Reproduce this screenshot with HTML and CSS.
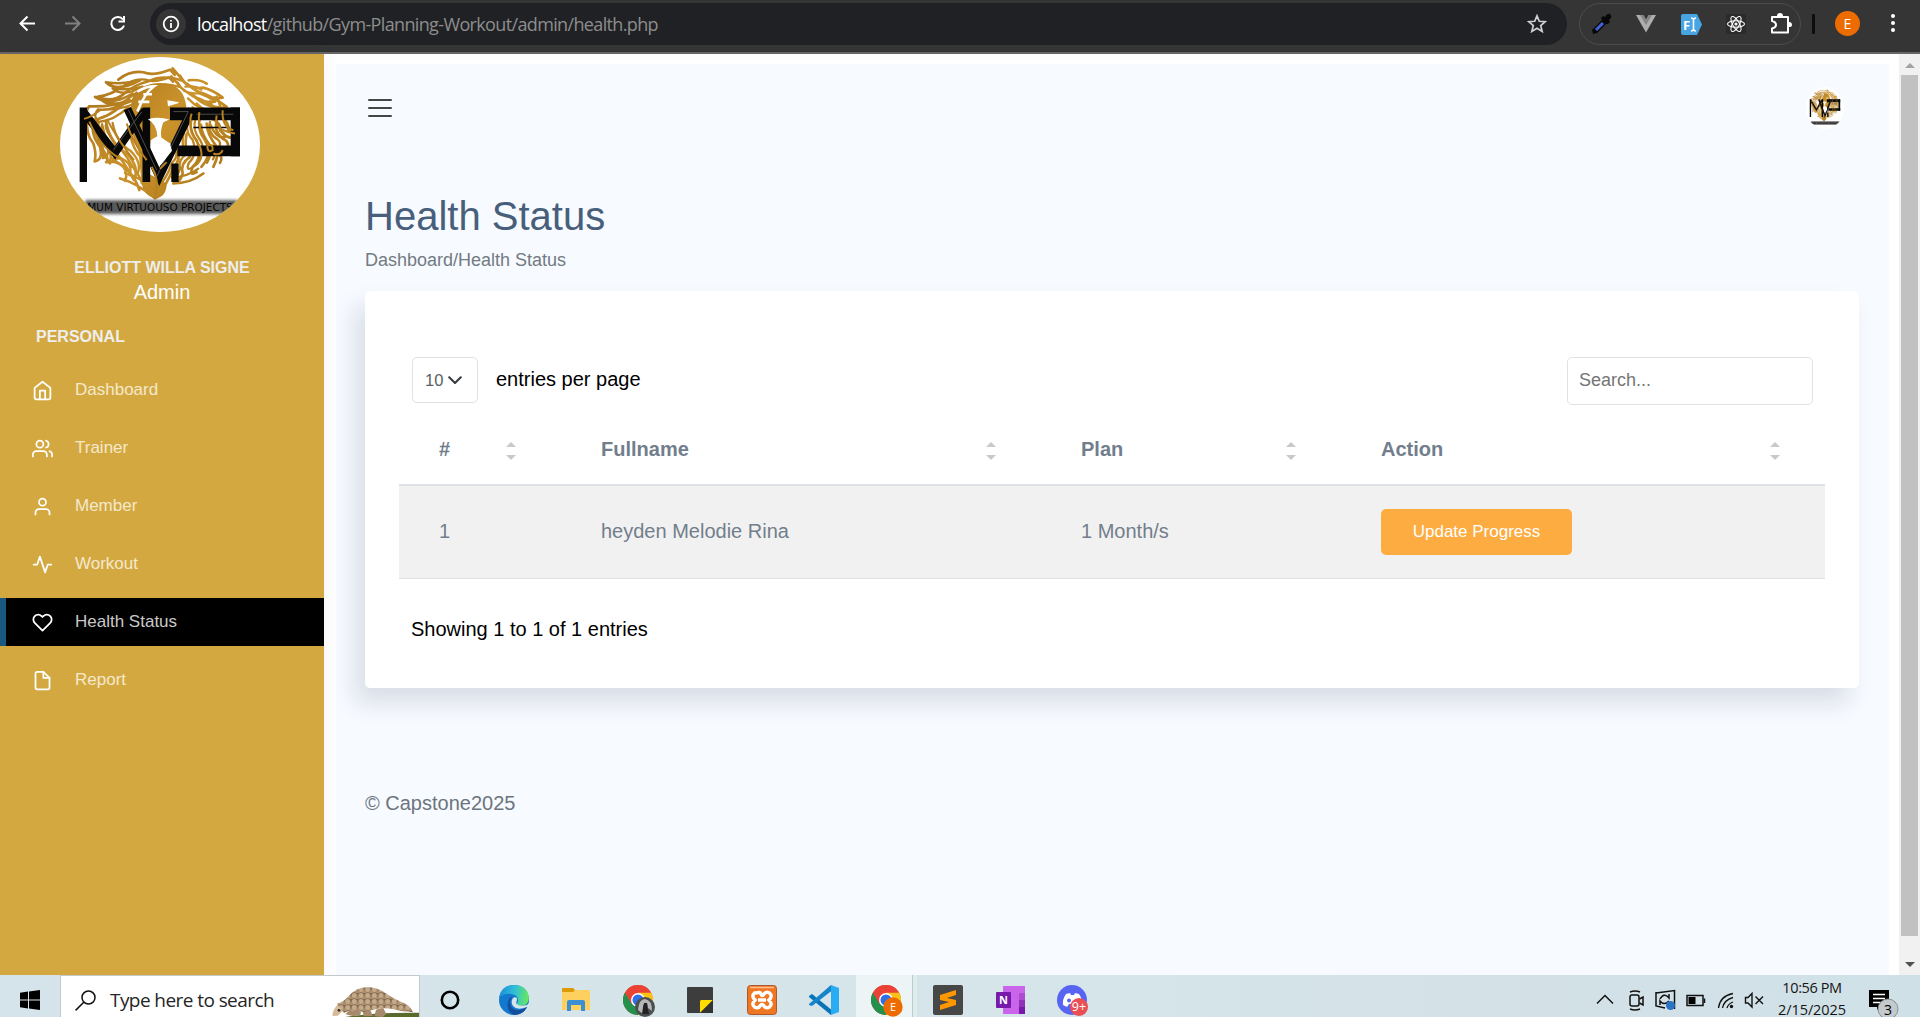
FILE: index.html
```html
<!DOCTYPE html>
<html lang="en">
<head>
<meta charset="utf-8">
<title>Health Status</title>
<link rel="stylesheet" href="styles.css">
</head>
<body>
<svg width="0" height="0" class="defs">
  <defs>
    <linearGradient id="gold" gradientUnits="userSpaceOnUse" x1="260" y1="60" x2="690" y2="440"><stop offset="0" stop-color="#a8721a"/><stop offset=".5" stop-color="#cb932b"/><stop offset="1" stop-color="#a97318"/></linearGradient>
    <filter id="soft" x="-10%" y="-40%" width="120%" height="180%"><feGaussianBlur stdDeviation="5"/></filter>
    <clipPath id="oval"><ellipse cx="480" cy="283" rx="300" ry="263"/></clipPath>
    <symbol id="logo" viewBox="180 20 600 526" preserveAspectRatio="none">
      <g clip-path="url(#oval)">
        <rect x="180" y="20" width="600" height="526" fill="#fff"/>
        <path fill="url(#gold)" d="M398 140Q420 100 480 98Q535 98 552 140Q572 190 540 255L520 285L500 275Q480 262 452 270L445 370L500 400Q500 440 465 446Q430 435 425 400L415 300Q380 200 398 140Z"/>
        <g id="mane" fill="none" stroke="url(#gold)" stroke-width="8" stroke-linejoin="round" stroke-linecap="round">
          <path d="M318 96Q370 104 420 90Q350 128 318 96M355 88Q390 60 430 66Q460 78 510 58L524 74L518 54L550 92Q490 72 448 92Q400 104 370 132Q340 158 292 140Q340 132 362 110M285 140Q330 170 398 130M268 168Q330 172 390 150M268 168Q248 190 270 210Q320 208 372 160"/>
          <path d="M540 76Q560 120 610 112Q640 120 668 142Q620 150 560 100M566 90Q600 86 620 100M575 130Q620 180 680 170Q640 138 590 122M590 160Q630 200 676 190M650 140Q672 180 650 198Q690 210 684 240Q702 248 700 262Q670 268 652 220"/>
          <path d="M262 208Q256 250 280 280Q290 310 284 334Q310 330 300 290Q270 250 282 220M282 218Q300 300 330 340Q340 300 310 260Q290 230 296 216M318 214Q330 280 380 310Q420 350 402 390Q370 330 334 290M310 300Q330 330 318 336Q350 330 370 350Q385 370 375 392M390 250Q400 300 422 320Q446 360 438 405M340 330Q400 360 418 420M360 385Q410 398 465 444"/>
          <path d="M580 190Q560 240 590 270Q610 320 578 350Q566 380 590 366M600 200Q590 240 615 270Q640 310 604 350M620 220Q620 250 650 290Q660 310 640 350M650 210Q640 250 676 270Q690 280 680 300Q650 280 650 306Q672 320 660 338M560 250Q550 300 570 320Q540 340 548 370Q540 400 520 400Q570 400 610 370M530 300Q545 330 520 350Q505 400 465 444"/>
        </g>
        <use href="#mane" transform="translate(58 30) scale(.88)"/>
        <g fill="none" stroke="#080808">
          <path stroke-width="22" d="M250 172V396"/>
          <path stroke-width="24" d="M250 184L345 308L435 180"/>
          <path stroke-width="23" d="M439 172V396"/>
          <path stroke-width="24" d="M382 175L478 380L576 176"/>
          <path stroke-width="22" d="M525 396V340"/>
          <path stroke-width="38" d="M510 191H720"/>
          <path stroke-width="28" d="M706 172V318"/>
          <path stroke-width="32" d="M532 302H720"/>
          <path stroke-width="5" d="M580 232H690"/>
        </g>
        <path fill="none" stroke="#4c4c4c" stroke-width="3" d="M520 184H565L470 380M590 192H700M385 178L470 360M340 300L425 185"/>
        <path fill="#fff" d="M444 207Q475 198 508 208L490 216Q480 240 484 262L510 280L516 302L482 345L456 290L455 268L472 258Q470 222 444 207M502 150L538 156L532 160L504 168Z"/>
        <path fill="none" stroke="#fff" stroke-width="8" d="M412 124Q440 108 462 108Q434 128 412 184M415 155H448M430 132H456"/>
        <path fill="none" stroke="#b8811f" stroke-width="6" d="M252 206Q275 200 300 180Q340 176 372 160M268 214Q300 290 358 324M320 206Q360 280 402 330M380 220Q400 280 440 330M575 190Q560 230 600 290Q615 330 580 350M598 186Q590 240 626 280M622 286Q640 280 638 300Q622 310 622 286M650 196Q640 240 705 250M668 180Q664 230 700 240M480 356L500 336M455 350Q480 390 465 438M640 310Q660 318 668 300"/>
        <g filter="url(#soft)"><rect x="256" y="450" width="456" height="42" fill="#222" opacity=".75"/></g>
        <text x="480" y="484" text-anchor="middle" textLength="436" lengthAdjust="spacingAndGlyphs" font-family="DejaVu Sans" font-size="29" fill="#050505">MUM VIRTUOUSO PROJECTS</text>
      </g>
    </symbol>
    <symbol id="chrome" viewBox="0 0 30 30">
      <circle cx="15" cy="15" r="15" fill="#ea4335"/>
      <path fill="#fbc116" d="M15 15L15 30A15 15 0 0 0 28 7.500H15Z"/>
      <path fill="#23904b" d="M2 7.500A15 15 0 0 0 15 30L21.500 18.700L8.500 18.700Z"/>
      <path fill="#ea4335" d="M2 7.500A15 15 0 0 1 28 7.500H15L8.500 18.500Z"/>
      <circle cx="15" cy="15" r="7" fill="#fff"/><circle cx="15" cy="15" r="5.500" fill="#2f70e8"/>
    </symbol>
  </defs>
</svg>

<header class="chrome">
  <svg class="nav-icons" width="150" height="52" viewBox="0 0 150 52" fill="none" stroke="#fff" stroke-width="2">
    <path d="M35 23.500H21M27.500 16.500L20.500 23.500L27.500 30.500"/>
    <path stroke="#808080" d="M65 23.500H79M72.500 16.500L79.500 23.500L72.500 30.500"/>
    <path d="M123 19.500A6.500 6.500 0 1 0 124 25.500M124 16V21.500H118.500"/>
  </svg>
  <div class="omnibox">
    <span class="site-info"><svg width="18" height="18" viewBox="0 0 18 18" fill="none" stroke="#fff" stroke-width="1.800"><circle cx="9" cy="9" r="7.300"/><path d="M9 8V13M9 5V6.500"/></svg></span>
    <span class="url"><b>localhost</b>/github/Gym-Planning-Workout/admin/health.php</span>
    <svg class="star" width="20" height="20" viewBox="0 0 20 20" fill="none" stroke="#d0d0d0" stroke-width="1.700"><path d="M10 1.800L12.300 7.300L18.300 7.700L13.700 11.600L15.200 17.500L10 14.300L4.800 17.500L6.300 11.600L1.700 7.700L7.700 7.300Z"/></svg>
  </div>
  <div class="extensions">
    <svg width="20" height="22" viewBox="0 0 20 22"><path fill="#080808" d="M1 21L0 17L10 7L9 5L11 3L13 4Q15 0 18 1Q21 4 17 7L18 9L16 11L14 11L5 20Z"/><path stroke="#4361d8" stroke-width="3" d="M4 17L11 10"/></svg>
    <svg width="20" height="18" viewBox="0 0 20 18"><path fill="#aeaeae" d="M0 0H7L10 5L13 0H20L10 17.500Z"/><path fill="#858585" d="M4 0H7.500L10 4.500L12.500 0H16L10 10Z"/></svg>
    <svg width="21" height="21" viewBox="0 0 21 21"><path fill="#47a5e3" d="M2 0H16L21 10.500L16 21H2Q0 21 0 19V2Q0 0 2 0Z"/><text x="2" y="15.500" font-family="Noto Sans" font-size="13" font-weight="bold" fill="#fff">F</text><path d="M10 4Q12.500 4 12.500 6V15Q12.500 17 10 17M15 4Q12.500 4 12.500 6M15 17Q12.500 17 12.500 15" stroke="#fff" stroke-width="1.600" fill="none"/></svg>
    <svg width="20" height="20" viewBox="0 0 20 20" fill="none" stroke="#fff" stroke-width="1.100"><rect width="20" height="20" fill="#2b2b2b" stroke="none"/><ellipse cx="10" cy="10" rx="8.500" ry="3.300"/><ellipse cx="10" cy="10" rx="8.500" ry="3.300" transform="rotate(60 10 10)"/><ellipse cx="10" cy="10" rx="8.500" ry="3.300" transform="rotate(120 10 10)"/><circle cx="10" cy="10" r="1" fill="#fff"/></svg>
    <svg width="22" height="22" viewBox="0 0 22 22" fill="none" stroke="#fff" stroke-width="2"><path d="M2 4H18V19.500H2V15.500Q6 14.500 6 12Q6 9 2 8Z" stroke-linejoin="round"/><path d="M7 3Q7 0 10 0Q13 0 13 3ZM19 9Q22 9 22 12Q22 14 19 14Z" fill="#fff" stroke="none"/></svg>
  </div>
  <span class="bar-sep"></span>
  <span class="profile">E</span>
  <span class="kebab"><i></i><i></i><i></i></span>
</header>

<div class="page">
  <aside class="sidebar">
    <svg class="brand" width="200" height="175"><use href="#logo" width="200" height="175"/></svg>
    <div class="user-name">ELLIOTT WILLA SIGNE</div>
    <div class="user-role">Admin</div>
    <div class="section">PERSONAL</div>
    <nav class="menu">
      <a><svg viewBox="0 0 24 24"><path d="M3 9l9-7 9 7v11a2 2 0 0 1-2 2H5a2 2 0 0 1-2-2z"/><path d="M9 22V12h6v10"/></svg>Dashboard</a>
      <a><svg viewBox="0 0 24 24"><path d="M17 21v-2a4 4 0 0 0-4-4H5a4 4 0 0 0-4 4v2"/><circle cx="9" cy="7" r="4"/><path d="M23 21v-2a4 4 0 0 0-3-3.870M16 3.130a4 4 0 0 1 0 7.750"/></svg>Trainer</a>
      <a><svg viewBox="0 0 24 24"><path d="M20 21v-2a4 4 0 0 0-4-4H8a4 4 0 0 0-4 4v2"/><circle cx="12" cy="7" r="4"/></svg>Member</a>
      <a><svg viewBox="0 0 24 24"><path d="M22 12h-4l-3 9L9 3l-3 9H2"/></svg>Workout</a>
      <a class="active"><svg viewBox="0 0 24 24"><path d="M20.840 4.610a5.500 5.500 0 0 0-7.780 0L12 5.670l-1.060-1.060a5.500 5.500 0 0 0-7.780 7.780l1.060 1.060L12 21.230l7.780-7.780 1.060-1.060a5.500 5.500 0 0 0 0-7.780z"/></svg>Health Status</a>
      <a><svg viewBox="0 0 24 24"><path d="M13 2H6a2 2 0 0 0-2 2v16a2 2 0 0 0 2 2h12a2 2 0 0 0 2-2V9z"/><path d="M13 2v7h7"/></svg>Report</a>
    </nav>
  </aside>
  <main class="main">
    <div class="topbar">
      <div class="burger"><i></i><i></i><i></i></div>
      <svg class="avatar" width="38" height="42"><use href="#logo" width="38" height="42"/></svg>
    </div>
    <h1>Health Status</h1>
    <div class="crumbs">Dashboard/Health Status</div>
    <section class="card">
      <div class="tools">
        <div class="select">10<svg width="14" height="9" viewBox="0 0 14 9" fill="none" stroke="#343a40" stroke-width="2" stroke-linecap="round" stroke-linejoin="round"><path d="M1.200 1.200L7 7L12.800 1.200"/></svg></div>
        <span class="per-page">entries per page</span>
        <div class="search">Search...</div>
      </div>
      <table>
        <colgroup><col class="c1"><col class="c2"><col class="c3"><col class="c4"></colgroup>
        <thead><tr>
          <th><div>#<span class="sort"></span></div></th>
          <th><div>Fullname<span class="sort"></span></div></th>
          <th><div>Plan<span class="sort"></span></div></th>
          <th><div>Action<span class="sort"></span></div></th>
        </tr></thead>
        <tbody><tr><td>1</td><td>heyden Melodie Rina</td><td>1 Month/s</td><td class="act"><span class="btn">Update Progress</span></td></tr></tbody>
      </table>
      <div class="info">Showing 1 to 1 of 1 entries</div>
    </section>
    <footer class="foot">© Capstone2025</footer>
  </main>
  <div class="scroll"><i class="up"></i><i class="thumb"></i><i class="down"></i></div>
</div>

<div class="taskbar">
  <div class="start"><svg width="20" height="20" viewBox="0 0 20 20"><path d="M0 2.800L8 1.600V9.400H0ZM9 1.500L20 0V9.400H9ZM0 10.400H8V18.400L0 17.200ZM9 10.400H20V20L9 18.500Z"/></svg></div>
  <div class="find">
    <svg width="21" height="21" viewBox="0 0 21 21" fill="none" stroke="#111" stroke-width="1.500"><circle cx="13.500" cy="7.500" r="6.500"/><path d="M9 12L.6 20.400"/></svg>
    <span>Type here to search</span>
    <svg class="pangolin" width="88" height="31" viewBox="0 0 264 93">
      <defs><pattern id="scales" width="20" height="18" patternUnits="userSpaceOnUse"><rect width="20" height="18" fill="#80674e"/><circle cx="10" cy="8" r="8" fill="#c4aa88"/><circle cx="0" cy="17" r="7" fill="#a98f6e"/><circle cx="20" cy="17" r="7" fill="#a98f6e"/></pattern></defs>
      <path fill="#596a2d" d="M26 93Q110 76 264 77V93Z"/><path fill="#a78a69" d="M44 82Q50 70 70 70L90 75L88 83L68 88ZM135 68L156 62L166 80L155 90L130 88ZM95 72L118 70L126 87L98 88Z"/>
      <path fill="#d5bb98" d="M5 87Q2 74 18 55L36 48L43 68Q29 75 20 86Z"/><path fill="url(#scales)" d="M18 50Q38 46 52 28Q75 0 113 1Q142 2 164 19Q190 37 213 46Q235 53 246 75Q217 76 188 67Q152 60 122 70Q95 80 67 70L39 77Z"/><circle cx="24" cy="70" r="4" fill="#2a2430"/>
    </svg>
  </div>
  <div class="apps">
    <div class="cortana"><svg width="20" height="20" viewBox="0 0 20 20"><circle cx="10" cy="10" r="8.200" fill="none" stroke="#000" stroke-width="2.600"/></svg></div>
    <div><svg width="30" height="30" viewBox="0 0 30 30"><defs><linearGradient id="edge" x1="0" y1=".5" x2="1" y2=".6"><stop offset="0" stop-color="#1b8fd8"/><stop offset=".5" stop-color="#30bfd8"/><stop offset="1" stop-color="#6bea57"/></linearGradient></defs><circle cx="15" cy="15" r="15" fill="#1379ce"/><path fill="url(#edge)" d="M0 13Q2 0 15 0Q28 0 30 12Q30 21 21 21Q15 20 19 17Q20 10 12 9Q5 8 0 13Z"/><path fill="#134f9c" d="M13 12Q9 18 13 23Q19 28 28 22Q24 30 15 30Q7 26 9 17Q10 12 13 12Z"/><path fill="#d7e6eb" d="M13 15Q14 11 18 13Q18 16 17 18Q19 22 28 20L31 17V22H28Q18 26 14 21Q12 18 13 15Z"/></svg></div>
    <div><svg width="28" height="24" viewBox="0 0 28 24"><path fill="#dc9a05" d="M0 1Q0 0 1 0H11L14 3V6H0Z"/><path fill="#fed15f" d="M0 4H11L13 2H27Q28 2 28 4V22H0Z"/><path fill="#3c8fd2" d="M5 14Q5 12 7 12H21Q23 12 23 14V23H19V17H9V23H5Z"/></svg></div>
    <div><svg class="badged" width="32" height="32" viewBox="0 0 32 32"><use href="#chrome" width="30" height="30"/><circle cx="22" cy="22" r="10" fill="#4c4f50"/><path fill="#b6b8b8" d="M15 25Q16 14 22 14Q29 15 29 26L25 23Q25 17 22 18Q19 20 20 29Z"/><path fill="#222" d="M21 18H24V21L26 29H19Z"/></svg></div>
    <div><svg width="26" height="26" viewBox="0 0 26 26"><rect width="26" height="26" rx="1" fill="#3d3d3e"/><path fill="#fede00" d="M14 13H26L13 26V14Z"/><path fill="#333" d="M26 13V26H13Z"/></svg></div>
    <div><svg width="30" height="30" viewBox="0 0 30 30"><rect x=".5" y=".5" width="29" height="29" rx="3" fill="#ef7623" stroke="#ad5929"/><path d="M3 2.500H27" stroke="#ffbd91" stroke-width="1.500"/><path fill="none" stroke="#fff" stroke-width="3.500" d="M9.500 8Q13 6.500 14 9Q15 12 17 9Q19 6 22.500 8Q26 11 22 15Q26 19 22.500 22Q19 24 17 21Q15 18 13 21Q11 24 7.500 22Q4 19 8 15Q4 11 7.500 8ZM11 15H19"/></svg></div>
    <div><svg width="30" height="30" viewBox="0 0 30 30"><path fill="#0873b8" d="M0 11L3 9L24 26L22 30L0 12Z"/><path fill="#1684ca" d="M0 19L22 0L25 4L3 21L0 20Z"/><path fill="#29acf2" d="M22 0L30 3V27L22 30V0Z"/></svg></div>
    <div class="current"><svg class="badged" width="32" height="32" viewBox="0 0 32 32"><use href="#chrome" width="30" height="30"/><circle cx="22" cy="22" r="9.700" fill="#ed6c02"/><text x="22" y="26" text-anchor="middle" font-family="Open Sans" font-size="11" fill="#fff">E</text></svg></div>
    <div><svg width="30" height="30" viewBox="0 0 30 30"><rect width="30" height="30" rx="2" fill="#474747"/><path fill="#ff9800" d="M7 10L23 5V10L14 13L23 15V20L7 25V20L16 17L7 15Z"/></svg></div>
    <div><svg width="29" height="28" viewBox="0 0 29 28"><path fill="#ca64ea" d="M7 0H29V28H7Z"/><path fill="#ad4bd1" d="M23 7H29V14H23Z"/><path fill="#9032b8" d="M23 14H29V21H23Z"/><path fill="#7719aa" d="M23 21H29V28H23Z"/><rect y="6" width="15" height="16" rx="1" fill="#7719aa"/><text x="7.500" y="18" text-anchor="middle" font-family="Open Sans" font-weight="bold" font-size="11" fill="#fff">N</text></svg></div>
    <div><svg class="badged" width="32" height="32" viewBox="0 0 32 32"><circle cx="15" cy="15" r="15" fill="#5865f2"/><path fill="#fff" d="M9 9L13 8L14 10H17L18 8L22 9Q26 15 25 20L21 22L19 19H12L10 22L6 20Q5 15 9 9Z"/><circle cx="12" cy="15.500" r="2" fill="#5865f2"/><circle cx="22" cy="22" r="9" fill="#ea4f54"/><text x="22" y="26" text-anchor="middle" font-family="Open Sans" font-size="12.500" fill="#fff">9+</text></svg></div>
  </div>
  <svg class="tray" width="180" height="42" viewBox="0 0 180 42" fill="none" stroke="#111" stroke-width="1.500">
    <path d="M7 28.500L15 20.500L23 28.500"/>
    <rect x="40" y="20" width="9" height="11" rx="2"/><path d="M49.500 24L53 22V30L49.500 28M40 17Q45 15 50 17M40 34Q45 36 50 34"/>
    <path d="M66 18L84.500 15.500V34M66 17V31L75 33M70 24Q74 17 79 23V19M79 26Q74 31 70 26V30"/><circle cx="80.500" cy="30.500" r="4.500" fill="#2b74c4" stroke="none"/>
    <rect x="97" y="20.500" width="16" height="10"/><path d="M114.500 23.500V28"/><rect x="98.500" y="22" width="7" height="7" fill="#000" stroke="none"/>
    <path d="M128.500 33Q130 21 143 18.500M132.500 33Q134 25 143 22.500M137 33Q138 29 143 27" stroke-width="1.300"/><circle cx="141.500" cy="31.500" r="1.700" fill="#111" stroke="none"/>
    <path d="M155.500 22.500H158L162 18.500V32L158 28H155.500ZM165.500 21.500L173 29M173 21.500L165.500 29" stroke-width="1.400"/>
  </svg>
  <div class="clock"><span>10:56 PM</span><span class="date">2/15/2025</span></div>
  <svg class="notify" width="46" height="42" viewBox="0 0 46 42"><path d="M2 15H22V32H14L10 35V32H2Z"/><path stroke="#fff" stroke-width="1.500" d="M6 19.500H18M6 23.500H18M6 27.500H14"/><circle cx="21" cy="34" r="10" fill="#c3c9cc" stroke="#8d9194"/><text x="21" y="39.500" text-anchor="middle" font-family="Open Sans" font-size="14" fill="#000">3</text></svg>
</div>
</body>
</html>
```
FILE: styles.css
```css
* { box-sizing: border-box; }
body { margin: 0; width: 1920px; height: 1017px; overflow: hidden; display: flex; flex-direction: column; font-family: "Liberation Sans", Arial, sans-serif; font-size: 20px; background: #fff; }
.defs { position: absolute; }
svg { display: block; flex: none; }

.chrome { height: 54px; flex: none; background: #353535; border-bottom: 2px solid #686666; display: flex; align-items: flex-start; }
.omnibox { width: 1417px; height: 42px; margin-top: 3px; border-radius: 21px; background: #202124; display: flex; align-items: center; padding: 0 20px 0 6px; }
.star { margin-left: auto; }
.site-info { width: 30px; height: 30px; border-radius: 15px; background: #353535; display: grid; place-items: center; margin-right: 11px; }
.url { font-family: "Open Sans", sans-serif; font-size: 18px; letter-spacing: -0.64px; color: #8d8d8d; white-space: nowrap; }
.url b { font-weight: 400; color: #fff; }
.extensions { width: 222px; height: 42px; margin: 3px 0 0 12px; border: 1px solid #4c4c4c; border-radius: 21px; display: flex; align-items: center; justify-content: space-between; padding: 0 8px 0 12px; }
.bar-sep { width: 3px; height: 20px; margin: 14px 0 0 11px; background: #0c0c0c; border-radius: 1px; }
.profile { width: 25px; height: 25px; margin: 11px 0 0 20px; border-radius: 50%; background: #ed6c02; color: #fff; font: 14px/25px "Open Sans", sans-serif; text-align: center; }
.kebab { margin: 14px 0 0 31px; display: flex; flex-direction: column; gap: 3px; }
.kebab i { width: 4px; height: 4px; border-radius: 50%; background: #fff; }

.page { height: 921px; flex: none; display: flex; background: #fff; }
.sidebar { width: 324px; flex: none; background: #d3a841; padding-top: 3px; display: flex; flex-direction: column; box-shadow: 0 0 20px rgba(0, 0, 0, .05); }
.brand { margin-left: 60px; }
.user-name { margin-top: 27px; height: 18px; line-height: 18px; font-size: 16px; font-weight: 700; text-align: center; color: #eee; }
.user-role { margin-top: 3px; height: 24px; line-height: 24px; text-align: center; color: #fff; }
.section { margin: 24px 0 0 36px; height: 18px; line-height: 18px; font-size: 16px; font-weight: 700; color: #eee; }
.menu { margin-top: 20px; display: flex; flex-direction: column; gap: 10px; }
.menu a { height: 48px; display: flex; align-items: center; padding-left: 32px; font-size: 17px; color: #f5e8cb; line-height: 46px; padding-bottom: 1px; }
.menu svg { width: 21px; height: 21px; margin: 2px 22px 0 0; fill: none; stroke: #fff; stroke-width: 2; stroke-linecap: round; stroke-linejoin: round; }
.menu .active { background: #000; color: #c9c9c9; border-left: 6px solid #19587f; padding-left: 26px; }

.main { width: 1553px; margin: 10px 10px 0 12px; background: #f7faff; padding: 0 30px 0 29px; overflow: hidden; }
.topbar { height: 120px; display: flex; justify-content: space-between; padding: 23px 15px 0 3px; }
.burger { display: flex; flex-direction: column; gap: 6px; padding-top: 12px; }
.burger i { width: 24px; height: 2px; background: #464646; border-radius: 1px; }
h1 { margin: 8px 0 0; font-size: 40px; line-height: 48px; font-weight: 400; color: #475f7b; }
.crumbs { margin-top: 8px; font-size: 18px; line-height: 24px; height: 43px; color: #727a82; }
.card { height: 397px; background: #fff; border-radius: 5px; box-shadow: -10px 15px 23px rgba(25, 42, 70, .13); padding: 66px 34px 0; }
.tools { height: 69px; display: flex; align-items: flex-start; padding: 0 12px 0 13px; }
.select { width: 66px; height: 46px; border: 1px solid #dfe3e7; border-radius: 5px; padding-left: 12px; display: flex; align-items: center; gap: 5px; font-size: 16.500px; color: #5b6065; }
.per-page { line-height: 44px; margin-left: 18px; color: #000; }
.search { margin-left: auto; width: 246px; height: 48px; border: 1px solid #dfe3e7; border-radius: 5px; padding-left: 11px; font-size: 18px; line-height: 45px; color: #757575; }
table { width: 1426px; table-layout: fixed; border-collapse: separate; border-spacing: 0; color: #727e8c; }
.c1 { width: 162px; } .c2 { width: 480px; } .c3 { width: 300px; } .c4 { width: 484px; }
th { height: 60px; padding: 0 45px 13px 40px; text-align: left; border-bottom: 2px solid #dee2e6; }
th div { display: flex; align-items: center; justify-content: space-between; line-height: 24px; }
.sort { height: 18px; width: 10px; margin-top: 5px; display: flex; flex-direction: column; justify-content: space-between; }
.sort::before, .sort::after { content: ""; border: 5px solid transparent; border-top: 0; border-bottom: 5px solid #c9c9c9; }
.sort::after { border-bottom: 0; border-top: 5px solid #c9c9c9; }
td { height: 93px; padding: 0 0 2px 40px; background: #f1f1f1; border-bottom: 1px solid #dee2e6; }
.act { padding-bottom: 0; }
.btn { display: block; width: 191px; height: 46px; border-radius: 5px; background: #fdac41; color: #fff; font-size: 17px; line-height: 45px; text-align: center; }
.info { margin: 38px 0 0 12px; line-height: 24px; color: #000; }
.foot { margin-top: 103px; line-height: 24px; color: #6c757d; }

.scroll { width: 21px; background: #f1f1f1; display: flex; flex-direction: column; align-items: center; padding: 9px 0 8px; }
.scroll .up { border: 5px solid transparent; border-top: 0; border-bottom-color: #a3a3a3; }
.scroll .thumb { width: 17px; height: 861px; margin-top: 7px; background: #c1c1c1; }
.scroll .down { border: 5px solid transparent; border-bottom: 0; border-top-color: #505050; margin-top: auto; }

.taskbar { height: 42px; display: flex; background: linear-gradient(90deg, #d4e4ea, #d5e5e9 60%, #d4e1e7 75%, #cfe1e7); overflow: hidden; }
.start { width: 60px; padding: 15px 0 0 20px; }
.find { width: 360px; background: #fff; border: 1px solid #c5c9cb; border-bottom: 0; display: flex; padding-left: 14px; }
.find > svg:first-child { margin-top: 14px; }
.find span { margin: 9px 0 0 14px; font: 19px/30px "Open Sans", sans-serif; letter-spacing: -0.57px; color: #252525; white-space: nowrap; }
.pangolin { margin: 11px 0 0 auto; }
.apps { display: flex; margin-left: 1px; }
.apps div { width: 62px; display: grid; justify-content: center; align-content: start; padding-top: 10px; }
.apps .cortana { padding-top: 15px; padding-right: 4px; }
.apps div:nth-child(3) { padding-top: 13px; }
.apps div:nth-child(5) { padding-top: 12px; }
.apps div:nth-child(10) { padding-top: 11px; }
.apps .current { background: linear-gradient(90deg, transparent 1px, #edf4f6 1px 57px, #b9cccd 57px 58px, #e1ecef 58px); }
.apps .badged { margin-right: -2px; }
.tray { margin-left: 487px; }
.clock { width: 84px; height: 42px; display: flex; flex-direction: column; align-items: center; font: 14.500px/20px "Open Sans", sans-serif; letter-spacing: -0.4px; padding-top: 3px; gap: 2px; color: #151515; white-space: nowrap; }
.clock .date { letter-spacing: -0.1px; line-height: 20px; }
.notify { margin-left: 13px; }
```
